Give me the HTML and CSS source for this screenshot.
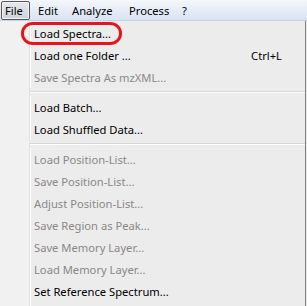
FILE: index.html
```html
<!DOCTYPE html>
<html lang="en">

<head>
    <meta charset="UTF-8" />
    <title>File Menu</title>
    <link rel="stylesheet" href="styles.css">
</head>

<body>
    <div class="menubar">
        <span class="top-item active">File</span>
        <span class="top-item edit">Edit</span>
        <span class="top-item analyze">Analyze</span>
        <span class="top-item process">Process</span>
        <span class="top-item help">?</span>
    </div>

    <div class="menu">
        <div class="item highlight"><span class="label">Load Spectra...</span></div>
        <div class="item"><span class="label">Load one Folder ...</span><span class="key">Ctrl+L</span></div>
        <div class="item disabled"><span class="label">Save Spectra As mzXML...</span></div>
        <div class="sep"></div>
        <div class="item"><span class="label">Load Batch...</span></div>
        <div class="item"><span class="label">Load Shuffled Data...</span></div>
        <div class="sep"></div>
        <div class="item disabled"><span class="label">Load Position-List...</span></div>
        <div class="item disabled"><span class="label">Save Position-List...</span></div>
        <div class="item disabled"><span class="label">Adjust Position-List...</span></div>
        <div class="item disabled"><span class="label">Save Region as Peak...</span></div>
        <div class="item disabled"><span class="label">Save Memory Layer...</span></div>
        <div class="item disabled"><span class="label">Load Memory Layer...</span></div>
        <div class="item"><span class="label">Set Reference Spectrum...</span></div>
    </div>
</body>

</html>
```

FILE: styles.css
```css
body {
    margin: 0;
    font-family: "Noto Sans", "DejaVu Sans", sans-serif;
    font-size: 11.2px;
    color: #000;
    background: #ececec;
    overflow: hidden;
}

.menubar {
    height: 20px;
    display: flex;
    align-items: center;
    background: linear-gradient(#f4f7fc, #dae3f2);
    border-bottom: 1px solid #c8d2e2;
    padding-left: 1px;
}

.top-item {
    box-sizing: border-box;
    padding-left: 7px;
    line-height: 17px;
    border: 1px solid transparent;
    white-space: nowrap;
}

.top-item.active {
    width: 29px;
    padding: 0 0 0 3px;
    border: 1px solid #555;
    border-radius: 2px;
    background: linear-gradient(#e6e9ed, #cdd2d9);
    box-shadow: inset 0 0 0 1px #f2f4f7;
}

.top-item.edit {
    width: 34px;
}

.top-item.analyze {
    width: 57px;
}

.top-item.process {
    width: 53px;
}

.top-item.help {
    width: 24px;
}

.menu {
    width: 305px;
    border-right: 1px solid #7f7f7f;
    background: linear-gradient(to right, #f1f1f1 29px, #e2e2e2 29px, #e2e2e2 30px, #fff 30px, #fff 31px, #ececec 31px);
    padding-top: 1px;
    height: 290px;
}

.item {
    height: 22px;
    display: flex;
    align-items: center;
    padding-left: 34px;
    padding-right: 23px;
    position: relative;
}

.item .label {
    flex-grow: 1;
}

.item.disabled {
    color: #8b8787;
}

.item.highlight::after {
    content: "";
    position: absolute;
    left: 21px;
    top: 0;
    width: 95px;
    height: 17px;
    border: 3px solid #e8141b;
    border-radius: 12px / 11px;
}

.sep {
    height: 8px;
    margin-left: 30px;
    background: linear-gradient(#ececec 3px, #d6d6d6 3px, #d6d6d6 4px, #fff 4px, #fff 5px, #ececec 5px);
}
```
